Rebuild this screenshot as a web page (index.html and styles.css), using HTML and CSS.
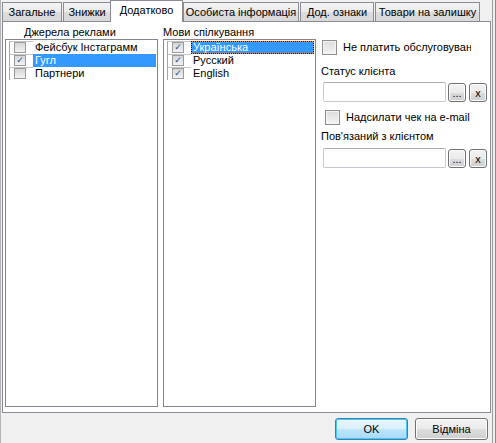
FILE: index.html
```html
<!DOCTYPE html>
<html lang="uk">
<head>
<meta charset="utf-8">
<title>Клієнт</title>
<link rel="stylesheet" href="styles.css">
</head>
<body>
<div class="window">
  <div class="tabs">
    <div class="tab t1">Загальне</div>
    <div class="tab t2">Знижки</div>
    <div class="tab active">Додатково</div>
    <div class="tab t4">Особиста інформація</div>
    <div class="tab t5">Дод. ознаки</div>
    <div class="tab t6">Товари на залишку</div>
  </div>
  <div class="page">
    <div class="caption cap1">Джерела реклами</div>
    <div class="caption cap2">Мови спілкування</div>
    <div class="list list1">
      <div class="item"><span class="chk"><span class="box"></span></span><span class="label">Фейсбук Інстаграмм</span></div>
      <div class="item"><span class="chk"><span class="box on">✓</span></span><span class="label sel">Гугл</span></div>
      <div class="item"><span class="chk"><span class="box"></span></span><span class="label">Партнери</span></div>
    </div>
    <div class="list list2">
      <div class="item"><span class="chk"><span class="box on">✓</span></span><span class="label sel focus">Українська</span></div>
      <div class="item"><span class="chk"><span class="box on">✓</span></span><span class="label">Русский</span></div>
      <div class="item"><span class="chk"><span class="box on">✓</span></span><span class="label">English</span></div>
    </div>
    <div class="form">
      <label class="check c1"><span class="cbox"></span><span class="ctext">Не платить обслуговування</span></label>
      <div class="flabel l1">Статус клієнта</div>
      <div class="field f1"><span class="input"></span><span class="btn">...</span><span class="btn">x</span></div>
      <label class="check c2"><span class="cbox"></span><span class="ctext">Надсилати чек на e-mail</span></label>
      <div class="flabel l2">Пов'язаний з клієнтом</div>
      <div class="field f2"><span class="input"></span><span class="btn">...</span><span class="btn">x</span></div>
    </div>
  </div>
  <div class="footer">
    <button class="pbtn ok">OK</button>
    <button class="pbtn">Відміна</button>
  </div>
</div>
</body>
</html>
```
FILE: styles.css
```css
html, body {
  margin: 0;
  padding: 0;
}
body {
  width: 496px;
  height: 443px;
  background: #f0f0f0;
  font-family: "Liberation Sans", Arial, sans-serif;
  font-size: 11px;
  color: #000;
  overflow: hidden;
}
.window {
  width: 493px;
  height: 443px;
  border-left: 1px solid #b4b4b4;
  border-right: 1px solid #9a9a9a;
  box-shadow: 2px 0 0 #f0f0f0, 3px 0 0 #8a8a8a;
  box-sizing: border-box;
  display: flex;
  flex-direction: column;
}

/* tab strip */
.tabs {
  display: flex;
  align-items: flex-end;
  height: 21px;
  padding-left: 1px;
  position: relative;
  z-index: 2;
}
.tab {
  height: 19px;
  box-sizing: border-box;
  border: 1px solid #898c95;
  border-bottom: none;
  background: linear-gradient(#f3f3f3, #ebebeb 50%, #dddddd 51%, #d8d8d8);
  display: flex;
  align-items: center;
  justify-content: center;
  white-space: nowrap;
  padding-bottom: 1px;
}
.t1 { width: 60px; }
.t2 { width: 48px; margin-left: 1px; }
.tab.active {
  width: 73px;
  height: 22px;
  margin-bottom: -1px;
  margin-left: -1px;
  background: #fff;
  padding-bottom: 3px;
}
.t4 { width: 116px; }
.t5 { width: 74px; margin-left: 1px; }
.t6 { width: 105px; margin-left: 1px; }

/* tab page */
.page {
  width: 489px;
  height: 392px;
  margin-left: 1px;
  box-sizing: border-box;
  background: #fff;
  border: 1px solid #898c95;
  display: grid;
  grid-template-columns: 153px 153px 1fr;
  grid-template-rows: 17px 1fr;
  column-gap: 5px;
  padding: 0 0 5px 2px;
}
.caption {
  align-self: center;
  padding-top: 2px;
  white-space: nowrap;
}
.cap1 { padding-left: 19px; }

.list {
  grid-row: 2;
  border: 1px solid #828790;
  background: #fff;
  padding-top: 1px;
}
.item {
  display: flex;
  height: 13px;
  align-items: stretch;
}
.chk {
  width: 24px;
  margin-left: 3px;
  flex: none;
  position: relative;
  border-left: 1px solid #a6a6a6;
  border-top: 1px solid #c4c4c4;
  box-sizing: border-box;
}
.box {
  position: absolute;
  left: 4px;
  top: 0;
  width: 12px;
  height: 11px;
  box-sizing: border-box;
  border: 1px solid #9a9a9a;
  background: linear-gradient(#d6d6d6, #f2f2f2);
  color: #2a4e8e;
  font-family: "DejaVu Sans", sans-serif;
  font-size: 9px;
  line-height: 9px;
  text-align: center;
  font-weight: bold;
}
.label {
  padding: 0 2px;
  line-height: 13px;
  white-space: nowrap;
  flex: 1;
}
.label.sel {
  background: #3399ff;
  color: #fff;
  margin-right: 1px;
}
.label.focus {
  border: 1px dotted #111;
  background: linear-gradient(#3399ff, #3399ff) padding-box, #f08a20 border-box;
  line-height: 11px;
  padding: 0 1px;
}

/* right column */
.form {
  grid-row: 1 / 3;
  padding-top: 17px;
  display: flex;
  flex-direction: column;
  align-items: flex-start;
  overflow: hidden;
}
.check {
  display: flex;
  align-items: center;
  white-space: nowrap;
  overflow: hidden;
}
.cbox {
  width: 15px;
  height: 15px;
  box-sizing: border-box;
  border: 1px solid #8e8f8f;
  background: linear-gradient(#dcdcdc, #f4f4f4);
  box-shadow: inset 0 0 0 1px #f4f4f4;
  flex: none;
}
.c1 { margin-left: 1px; height: 16px; width: 149px; }
.c1 .ctext { margin-left: 6px; }
.c2 { margin-left: 4px; margin-top: 7px; height: 16px; }
.c2 .ctext { margin-left: 6px; }
.flabel {
  height: 13px;
  line-height: 13px;
  white-space: nowrap;
}
.l1 { margin-top: 10px; }
.l2 { margin-top: 5px; }
.field {
  display: flex;
  align-items: center;
  gap: 2px;
  margin-left: 2px;
}
.f1 { margin-top: 4px; }
.f2 { margin-top: 5px; }
.input {
  width: 123px;
  height: 20px;
  box-sizing: border-box;
  border: 1px solid #c6cad1;
  border-top-color: #abadb3;
  border-radius: 2px;
  background: #fff;
}
.btn {
  width: 18px;
  height: 19px;
  box-sizing: border-box;
  border: 1px solid #707070;
  border-radius: 3px;
  background: linear-gradient(#f2f2f2, #ebebeb 50%, #dddddd 51%, #cfcfcf);
  box-shadow: inset 0 0 0 1px #fcfcfc;
  display: flex;
  align-items: flex-end;
  justify-content: center;
  line-height: 15px;
  font-size: 11px;
  color: #000;
}
.btn + .btn { margin-left: 1px; }

/* dialog buttons */
.footer {
  flex: 1;
  display: flex;
  justify-content: flex-end;
  align-items: flex-start;
  gap: 7px;
  padding: 5px 4px 0 0;
}
.pbtn {
  width: 73px;
  height: 22px;
  box-sizing: border-box;
  border: 1px solid #707070;
  border-radius: 3px;
  background: linear-gradient(#f2f2f2, #ebebeb 50%, #dddddd 51%, #cfcfcf);
  box-shadow: inset 0 0 0 1px #fcfcfc;
  font-family: "Liberation Sans", Arial, sans-serif;
  font-size: 11px;
  color: #000;
  padding: 0;
}
.pbtn.ok {
  border-color: #3c7fb1;
  background: linear-gradient(#eaf6fd, #d9f0fc 50%, #bee6fd 51%, #a7d9f5);
  box-shadow: inset 0 0 0 1px #48c8f6;
}
```
